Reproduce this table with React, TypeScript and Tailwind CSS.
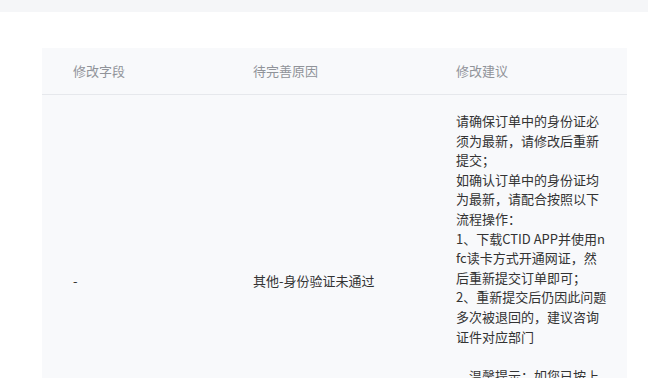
const suggestion = [
  "请确保订单中的身份证必须为最新，请修改后重新提交；",
  "如确认订单中的身份证均为最新，请配合按照以下流程操作：",
  "1、下载CTID APP并使用nfc读卡方式开通网证，然后重新提交订单即可；",
  "2、重新提交后仍因此问题多次被退回的，建议咨询证件对应部门",
];

export default function App() {
  return (
    <div
      className="min-h-screen bg-white text-[13px] leading-[19.6px] text-[#333]"
      style={{ fontFamily: '"Microsoft YaHei", "Noto Sans CJK SC", "Noto Sans", sans-serif' }}
    >
      {/* top bar */}
      <div className="h-[12px] bg-[#f5f6f8]" />

      <div className="pl-[42px] pr-[21px] pt-[36px]">
        <div className="bg-[#f8f9fb]">
          {/* header */}
          <div className="grid h-[47px] grid-cols-[180px_203px_1fr] items-center border-b border-[#e6e8ec] pl-[31px] text-[#909399]">
            <div>修改字段</div>
            <div>待完善原因</div>
            <div>修改建议</div>
          </div>

          {/* body row */}
          <div className="grid grid-cols-[180px_203px_1fr] items-center py-[16px] pl-[31px] pr-[20px]">
            <div>-</div>
            <div>其他-身份验证未通过</div>
            <div className="break-all pb-[7px]">
              {suggestion.map((line) => (
                <p key={line}>{line}</p>
              ))}
              <p className="h-[19.6px]" />
              <p className="indent-[13px]">温馨提示：如您已按上述流程操作仍无法通过验证，请联系在线客服协助处理。</p>
            </div>
          </div>
        </div>
      </div>
    </div>
  );
}
